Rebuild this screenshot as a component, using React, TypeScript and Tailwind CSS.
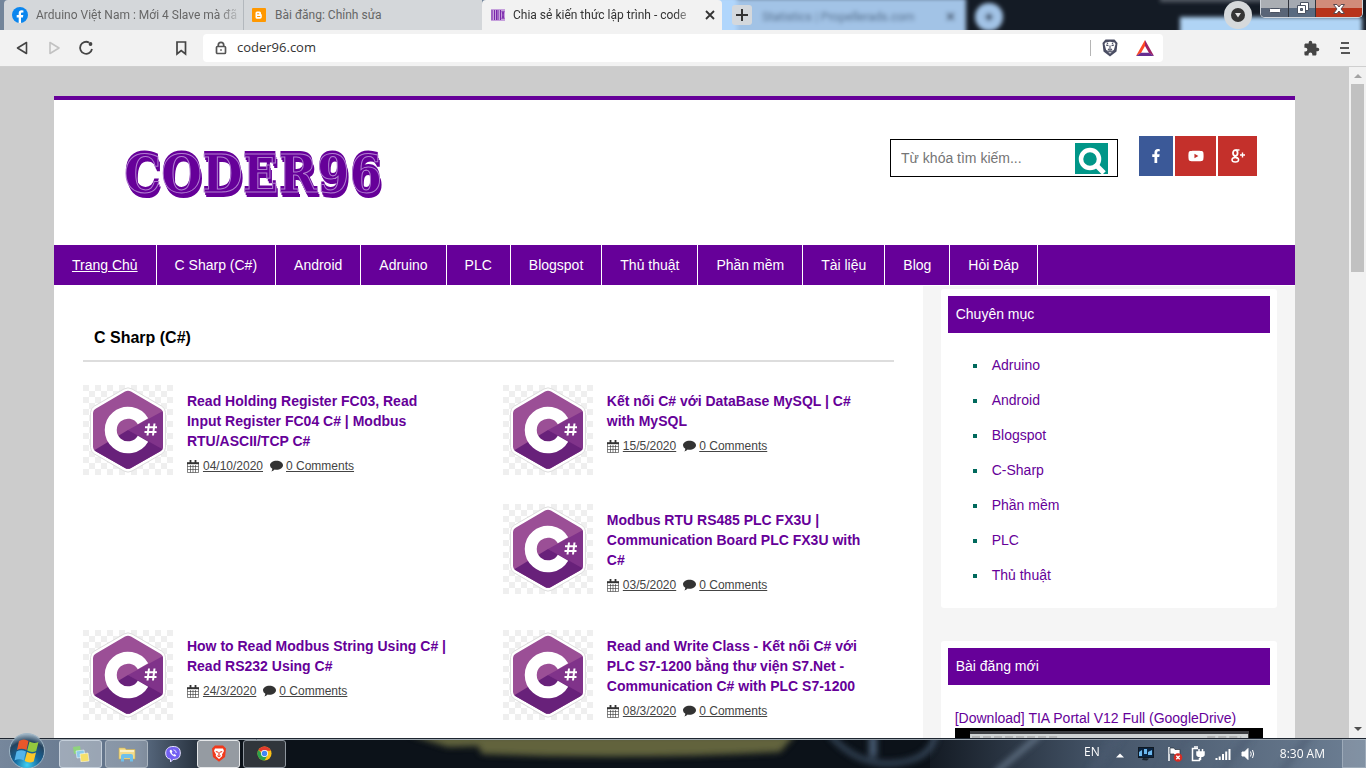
import { FaFacebookF, FaYoutube } from 'react-icons/fa';

const navItems = [
  'Trang Chủ',
  'C Sharp (C#)',
  'Android',
  'Adruino',
  'PLC',
  'Blogspot',
  'Thủ thuật',
  'Phần mềm',
  'Tài liệu',
  'Blog',
  'Hỏi Đáp',
];

const categories = ['Adruino', 'Android', 'Blogspot', 'C-Sharp', 'Phần mềm', 'PLC', 'Thủ thuật'];

const posts = [
  {
    title: 'Read Holding Register FC03, Read Input Register FC04 C# | Modbus RTU/ASCII/TCP C#',
    date: '04/10/2020',
    place: 'row-span-2',
  },
  { title: 'Kết nối C# với DataBase MySQL | C# with MySQL', date: '15/5/2020', place: '' },
  {
    title: 'Modbus RTU RS485 PLC FX3U | Communication Board PLC FX3U with C#',
    date: '03/5/2020',
    place: 'col-start-2',
  },
  { title: 'How to Read Modbus String Using C# | Read RS232 Using C#', date: '24/3/2020', place: 'col-start-1' },
  {
    title: 'Read and Write Class - Kết nối C# với PLC S7-1200 bằng thư viện S7.Net - Communication C# with PLC S7-1200',
    date: '08/3/2020',
    place: '',
  },
];

const TabBar = () => (
  <div className="relative flex h-[30px] shrink-0 overflow-hidden bg-[#141b25] pl-1">
    {/* Desktop seen through the glass frame */}
    <svg className="absolute inset-0 h-full w-full" aria-hidden="true">
      <defs>
        <filter id="glass" x="-10%" y="-50%" width="120%" height="200%">
          <feGaussianBlur stdDeviation="2" />
        </filter>
      </defs>
      <g filter="url(#glass)">
        <rect x="-10" y="-5" width="500" height="40" fill="#73859a" />
        <rect x="700" y="-2" width="266" height="45" fill="#a2c3e6" />
        <rect x="715" y="-4" width="22" height="45" fill="#b0d6fc" />
        <circle cx="989" cy="17" r="14" fill="#a2c3e6" />
        <path d="M985 17h8M989 13v8" stroke="#40536b" strokeWidth="3" />
        <path d="M947 13l7 7m0-7l-7 7" stroke="#40536b" strokeWidth="2" />
        <rect x="1180" y="17" width="182" height="40" fill="#b0d4f5" />
        <rect x="1160" y="-8" width="200" height="10" fill="#555b66" />
        <text x="762" y="21" fontSize="12" fill="#4c6685" fontFamily="Roboto, sans-serif">
          Statistics | Propellerads.com
        </text>
      </g>
    </svg>

    <div className="relative flex w-[240px] items-center gap-2 rounded-tl border-r border-[#b3b8bd] bg-[#d4d7da] pl-2">
      <svg viewBox="0 0 16 16" className="h-4 w-4 shrink-0">
        <circle cx="8" cy="8" r="8" fill="#0b86ee" />
        <path
          d="M9 16v-5.6h1.9l.4-2.3H9V6.7c0-.7.4-1.2 1.3-1.2h1.1v-2a9 9 0 0 0-1.8-.2c-1.8 0-2.9 1.1-2.9 3v1.8h-2v2.3h2V16z"
          fill="#fff"
        />
      </svg>
      <span className="flex-1 whitespace-nowrap [mask-image:linear-gradient(to_right,#000_88%,transparent)]">
        Arduino Việt Nam : Mới 4 Slave mà đã
      </span>
    </div>
    <div className="relative flex w-[238px] items-center gap-[9px] bg-[#d4d7da] pl-2">
      <svg viewBox="0 0 14 14" className="h-3.5 w-3.5 shrink-0">
        <rect width="14" height="14" rx="1" fill="#ff9800" />
        <path d="M5 3.500h2.500a1.500 1.500 0 0 1 1.500 1.500v.8c0 .5.3.7.8.7v2.500A1.700 1.700 0 0 1 8.100 10.700H5A1.500 1.500 0 0 1 3.500 9.200V5A1.500 1.500 0 0 1 5 3.500z" fill="#fff" />
        <path d="M5.500 5.800h1.300M5.500 8.500h2.400" stroke="#ff9800" strokeWidth="1" strokeLinecap="round" />
      </svg>
      <span>Bài đăng: Chỉnh sửa</span>
    </div>
    <div className="relative flex w-[240px] items-center gap-2 rounded-t bg-[#f2f2f2] pl-[9px] text-[#333]">
      <svg viewBox="0 0 14 12" className="h-3 w-3.5 shrink-0">
        <rect width="14" height="12" fill="#c6a0dc" />
        <path d="M1 1v10M3.500 1v10M5.500 1v10M7 1v10M9.500 1v10M11 2l2 8M13 2l-2 8" stroke="#7a27ab" strokeWidth="1" />
      </svg>
      <span className="flex-1 whitespace-nowrap [mask-image:linear-gradient(to_right,#000_88%,transparent)]">
        Chia sẻ kiến thức lập trình - code
      </span>
      <button aria-label="Close tab" className="mr-[7px]">
        <svg viewBox="0 0 10 10" className="h-2.5 w-2.5" stroke="#333" strokeWidth="1.8">
          <path d="M1 1l8 8M9 1l-8 8" />
        </svg>
      </button>
    </div>
    <button
      aria-label="New tab"
      className="relative mt-[5px] ml-2.5 flex h-5 w-5 items-center justify-center rounded-[3px] bg-[#d4d8dc]"
    >
      <svg viewBox="0 0 12 12" className="h-3 w-3" stroke="#333" strokeWidth="2">
        <path d="M6 0v12M0 6h12" />
      </svg>
    </button>

    <div className="relative ml-auto flex items-start gap-2 pr-[3px]">
      <button aria-label="Search tabs" className="mt-px flex h-7 w-7 items-center justify-center rounded-full bg-[#d6d9db]">
        <svg viewBox="0 0 14 14" className="h-3.5 w-3.5">
          <circle cx="7" cy="7" r="7" fill="#353535" />
          <path d="M4 5h6L7 9.500z" fill="#e4e4e4" />
        </svg>
      </button>
      <div className="flex h-[18px] overflow-hidden rounded-b-[5px] border border-t-0 border-[#cfd4da]">
        <button aria-label="Minimize" className="flex w-[28px] items-center justify-center border-r border-[#30343c] bg-linear-to-b from-[#aaaeb3] from-50% to-[#596577] to-50%">
          <svg viewBox="0 0 12 5" className="mt-1 h-[5px] w-3">
            <rect x=".5" y=".5" width="11" height="4" rx="1" fill="#fff" stroke="#4b5362" />
          </svg>
        </button>
        <button aria-label="Restore" className="flex w-[27px] items-center justify-center border-r border-[#30343c] bg-linear-to-b from-[#a4a9b1] from-50% to-[#596a80] to-50%">
          <svg viewBox="0 0 13 13" className="h-[13px] w-[13px]" fill="#fff" stroke="#4b5362">
            <path d="M4.500 .5h8v8h-8z" />
            <path d="M1.500 3.500h8v8h-8z" />
            <path d="M4.500 6.500h2v2h-2z" fill="#687789" />
          </svg>
        </button>
        <button aria-label="Close" className="flex w-[46px] items-center justify-center bg-linear-to-b from-[#d18c7a] from-50% to-[#b8331a] to-50%">
          <svg viewBox="0 0 12 10" className="h-2.5 w-3">
            <path d="M.5 .5H4L6 3 8 .5h3.500L8 5l3.500 4.500H8L6 7 4 9.500H.5L4 5z" fill="#fff" stroke="#5b4a50" />
          </svg>
        </button>
      </div>
    </div>
  </div>
);

const Toolbar = () => (
  <div className="flex h-[37px] shrink-0 items-center border-b border-[#cfcfcf] bg-[#f2f2f2] px-4">
    <button aria-label="Back">
      <svg viewBox="0 0 14 16" className="h-4 w-3.5" fill="none" stroke="#444" strokeWidth="1.6" strokeLinejoin="round">
        <path d="M10.500 2.500v11L1.500 8z" />
      </svg>
    </button>
    <button aria-label="Forward" className="ml-[18px]">
      <svg viewBox="0 0 14 16" className="h-4 w-3.5" fill="none" stroke="#c2c2c2" strokeWidth="1.6" strokeLinejoin="round">
        <path d="M2 2.500v11L11 8z" />
      </svg>
    </button>
    <button aria-label="Reload" className="ml-4">
      <svg viewBox="0 0 16 16" className="h-4 w-4" fill="none" stroke="#444" strokeWidth="1.8">
        <path d="M14 9a6 6 0 1 1-3-6.500" />
        <circle cx="12.500" cy="4" r="1.900" fill="#444" stroke="none" />
      </svg>
    </button>
    <button aria-label="Bookmark" className="ml-20">
      <svg viewBox="0 0 14 16" className="h-4 w-3.5" fill="none" stroke="#444" strokeWidth="1.7">
        <path d="M3 2h8.500v12L7.200 10.500 3 14z" />
      </svg>
    </button>
    <div className="ml-[15px] flex h-7 w-[960px] items-center rounded bg-white pr-2 pl-3">
      <svg viewBox="0 0 12 14" className="h-3.5 w-3 shrink-0" fill="none" stroke="#555" strokeWidth="1.7">
        <rect x="1.500" y="5.500" width="9" height="7" rx="1" />
        <path d="M3.300 5.500V4a2.700 2.700 0 0 1 5.400 0v1.500" />
        <path d="M5.200 9h1.600" />
      </svg>
      <input
        aria-label="Address"
        defaultValue="coder96.com"
        className="ml-2.5 min-w-0 flex-1 font-['Open_Sans','Noto_Sans',sans-serif] text-[13px] text-[#333] outline-none"
      />
      <div className="h-4 w-px bg-[#b5b5b5]" />
      <svg viewBox="0 0 16 18" className="ml-[11px] h-[18px] w-4 shrink-0">
        <path d="M3.500 .5h9L15.500 4l-1 8.500L8 17.500 1.500 12.500.5 4z" fill="#4a4d63" />
        <path d="M3.500 3.500L8 2.800l4.500 .7 1 1.500-1.500 5.500L8 14.800 4 10.500 2.500 5z" fill="#fff" />
        <path d="M4 6l2.500 .8M12 6l-2.500 .8M8 6.500v3.500M6 10l2 1.300 2-1.300M5.500 11.800L8 13l2.500-1.200M5 3.800l1 1.500M11 3.800l-1 1.500" stroke="#4a4d63" strokeWidth="1.1" fill="none" />
      </svg>
      <svg viewBox="0 0 18 16" className="mr-px ml-[18px] h-4 w-[18px] shrink-0">
        <path d="M9 0L0 16l5-3 4-7z" fill="#ff4724" />
        <path d="M9 0l9 16-5-3-4-7z" fill="#9e1f63" />
        <path d="M0 16h18l-5-3.200H5z" fill="#662d91" />
      </svg>
    </div>
    <button aria-label="Extensions" className="ml-auto">
      <svg viewBox="0 0 24 24" className="h-[17px] w-[17px]" fill="#444">
        <path d="M20.500 11H19V7c0-1.100-.9-2-2-2h-4V3.500a2.500 2.500 0 0 0-5 0V5H4c-1.100 0-2 .9-2 2v3.800h1.500a2.700 2.700 0 0 1 0 5.400H2V20c0 1.100.9 2 2 2h3.800v-1.500a2.700 2.700 0 0 1 5.400 0V22H17c1.100 0 2-.9 2-2v-4h1.500a2.500 2.500 0 0 0 0-5z" />
      </svg>
    </button>
    <button aria-label="Menu" className="ml-5">
      <svg viewBox="0 0 10 12" className="h-3 w-2.5" stroke="#555" strokeWidth="2">
        <path d="M1 1h8M0 6h9M1 11h9" />
      </svg>
    </button>
  </div>
);

const CSharpThumb = () => (
  <svg viewBox="0 0 90 90" className="h-[90px] w-[90px] shrink-0" role="img" aria-label="C#">
    <defs>
      <pattern id="checks" width="12" height="12" patternUnits="userSpaceOnUse">
        <rect width="12" height="12" fill="#fff" />
        <path d="M0 0h6v6H0zM6 6h6v6H6z" fill="#efefef" />
      </pattern>
      <clipPath id="hex">
        <path d="M42 6.500q3-1.700 6 0l29 17q3 1.700 3 5v33q0 3.300-3 5l-29 16.500q-3 1.700-6 0l-29-16.500q-3-1.700-3-5v-33q0-3.300 3-5z" />
      </clipPath>
    </defs>
    <rect width="90" height="90" fill="url(#checks)" />
    <path
      d="M41 4q4-2.300 8 0l29.500 17q4 2.300 4 6.500v35q0 4.200-4 6.500L49 86q-4 2.300-8 0L11.500 69q-4-2.300-4-6.500v-35q0-4.200 4-6.500z"
      fill="#fff"
      stroke="#ddd"
      strokeWidth="1"
    />
    <g clipPath="url(#hex)">
      <rect width="90" height="90" fill="#9b4f96" />
      <path d="M45 45l37-20v42z" fill="#80338a" />
      <path d="M10 66l35-21 36 20v25H10z" fill="#68217a" />
    </g>
    <path d="M60 36.300A17.300 17.300 0 1 0 60 53.700" fill="none" stroke="#fff" strokeWidth="12" />
    <path d="M66 38.500l-1.500 12M71.500 38.500l-1.500 12M62 42.200h12M61.500 47h12" stroke="#fff" strokeWidth="2" />
  </svg>
);

const CalendarIcon = () => (
  <svg viewBox="0 0 12 13" className="h-[13px] w-3" fill="none" stroke="#333">
    <path d="M.5 3v9.500h11V3M.5 6.500h11M.5 9.500h11M3.500 5v7.500M6 5v7.500M8.500 5v7.500" strokeWidth=".6" />
    <path d="M0 3.200h12" strokeWidth="2" />
    <path d="M3.500 0v3.500M8.500 0v3.500" strokeWidth="1.8" />
  </svg>
);

const CommentIcon = () => (
  <svg viewBox="0 0 13 12" className="mr-[3px] ml-[7px] h-3 w-[13px]" fill="#333">
    <path d="M6.500 .8C10 .8 13 2.800 13 5.300s-3 4.500-6.500 4.500q-1 0-1.800-.2Q3.200 11.300 1.300 11.500 2.300 10.300 2.300 8.800 0 7.500 0 5.300C0 2.800 3 .8 6.500 .8z" />
  </svg>
);

type PostProps = { title: string; date: string; place: string };

const Post = ({ title, date, place }: PostProps) => (
  <article className={`flex items-start gap-3.5 pr-[23px] ${place}`}>
    <CSharpThumb />
    <div className="pt-1.5">
      <h3 className="text-[14px] leading-5 font-bold text-[#660099]">
        <a href="#">{title}</a>
      </h3>
      <div className="mt-px mb-0.5 flex h-7 items-center text-[12px] text-[#444]">
        <CalendarIcon />
        <a href="#" className="ml-1 underline">{date}</a>
        <CommentIcon />
        <a href="#" className="underline">0 Comments</a>
      </div>
    </div>
  </article>
);

const Header = () => (
  <header className="flex h-[145px] items-start justify-between pr-[38px] pl-[70px]">
    <a
      href="#"
      className="mt-[42px] font-['DejaVu_Serif_Condensed','DejaVu_Serif',serif] text-[52px] leading-[64px] font-bold text-[#660099] [-webkit-text-stroke:1px_#b17dd0] [text-shadow:0_-3px_0_#660099,1px_3px_0_#660099,2px_5px_0_#660099]"
    >
      CODER96
    </a>
    <div className="flex pt-9">
      <form className="mt-[3px] flex h-[38px] w-[228px] items-start border border-black pt-[3px] pr-[9px] pl-2.5">
        <input
          type="text"
          aria-label="Từ khóa tìm kiếm"
          placeholder="Từ khóa tìm kiếm..."
          className="h-[30px] min-w-0 flex-1 text-[14px] outline-none placeholder:text-[#757575]"
        />
        <button type="button" aria-label="Search" className="h-[31px] w-[33px] bg-[#009688]">
          <svg viewBox="0 0 33 31" className="h-full w-full" fill="none" stroke="#fff">
            <circle cx="15" cy="16" r="9" strokeWidth="4.5" />
            <path d="M21 22l8 8" strokeWidth="5" />
          </svg>
        </button>
      </form>
      <div className="ml-[21px] flex h-10 gap-0.5 text-white">
        <a href="#" aria-label="Facebook" className="flex w-[34px] items-center justify-center bg-[#3b5998]">
          <FaFacebookF className="h-3.5 w-3.5" />
        </a>
        <a href="#" aria-label="YouTube" className="flex w-[41px] items-center justify-center bg-[#c4302b]">
          <FaYoutube className="h-4 w-4" />
        </a>
        <a href="#" aria-label="Google Plus" className="flex w-[39px] items-center justify-center bg-[#c4302b]">
          <svg viewBox="0 0 14 14" className="h-3.5 w-3.5" fill="none" stroke="#fff">
            <ellipse cx="4.300" cy="4" rx="2.300" ry="2.800" strokeWidth="1.8" />
            <ellipse cx="4.300" cy="10.700" rx="3.300" ry="2.300" strokeWidth="1.5" />
            <path d="M4 6.500q-1 1 .5 1.500t2 1.500M4.500 1H8.500" strokeWidth="1.6" />
            <path d="M9 6h5M11.500 3.500v5" strokeWidth="1.4" />
          </svg>
        </a>
      </div>
    </div>
  </header>
);

const Sidebar = () => (
  <aside className="mt-px flex w-[30%] flex-col gap-[33px] bg-[#f5f5f5] px-[18px] pt-[3px]">
    <section className="rounded-[3px] bg-white p-[7px]">
      <h2 className="bg-[#660099] px-2 text-[14px] leading-[37px] text-white">Chuyên mục</h2>
      <ul className="mt-[15px] pb-2 pl-[25px] text-[14px] leading-[35px]">
        {categories.map((name) => (
          <li key={name} className="flex items-center gap-[15px] before:h-1 before:w-1 before:bg-[#00695c]">
            <a href="#" className="text-[#660099]">{name}</a>
          </li>
        ))}
      </ul>
    </section>
    <section className="rounded-[3px] bg-white p-[7px]">
      <h2 className="bg-[#660099] px-2 text-[14px] leading-[37px] text-white">Bài đăng mới</h2>
      <div className="px-[7px] pt-[23px]">
        <a href="#" className="block text-[14px] leading-5 text-[#660099]">
          [Download] TIA Portal V12 Full (GoogleDrive)
        </a>
        <svg viewBox="0 0 308 180" className="w-full" role="img" aria-label="TIA Portal">
          <rect width="308" height="180" fill="#000" />
          <rect x="15" y="3" width="278" height="150" fill="#cfd3d3" />
          <rect x="15" y="3" width="278" height="3" fill="#3b3d40" />
          <path d="M17 9h88M252 9h34" stroke="#999" strokeWidth="1" strokeDasharray="8 3" />
        </svg>
      </div>
    </section>
  </aside>
);

const Page = () => (
  <div className="flex min-h-0 flex-1 bg-[#ccc]">
    <div className="min-w-0 flex-1 overflow-hidden">
      <div className="mx-auto mt-[29px] w-[92%] border-t-4 border-[#660099] bg-white">
        <Header />
        <nav className="bg-[#660099]">
          <ul className="flex w-[984px] text-[14px] leading-10 text-white">
            {navItems.map((item, i) => (
              <li key={item} className="grow border-r border-white text-center">
                <a href="#" className={i === 0 ? 'underline' : ''}>
                  <span className="px-4">{item}</span>
                </a>
              </li>
            ))}
          </ul>
        </nav>
        <div className="flex">
          <main className="w-[70%] px-[29px] pt-[29px]">
            <h2 className="border-b-2 border-[#ddd] pt-3 pb-2.5 pl-[11px] text-[16px] leading-6 font-bold text-black">
              C Sharp (C#)
            </h2>
            <div className="mt-[23px] grid grid-cols-2 items-start gap-[29px]">
              {posts.map((post) => (
                <Post key={post.title} {...post} />
              ))}
            </div>
          </main>
          <Sidebar />
        </div>
      </div>
    </div>

    {/* Scrollbar */}
    <div className="flex w-[17px] flex-col items-center justify-between bg-[#f1f1f1] py-1.5">
      <div className="flex flex-col items-center gap-[5px]">
        <svg viewBox="0 0 8 6" className="h-1.5 w-2" fill="#a3a3a3">
          <path d="M0 5l4-4 4 4z" />
        </svg>
        <div className="h-[188px] w-[13px] bg-[#c1c1c1]" />
      </div>
      <svg viewBox="0 0 8 6" className="h-1.5 w-2" fill="#505050">
        <path d="M0 1l4 4 4-4z" />
      </svg>
    </div>
  </div>
);

const taskButton = 'flex h-[28px] w-[43px] items-center justify-center rounded-[3px] border';

const Taskbar = () => (
  <footer className="relative flex h-[30px] shrink-0 items-center border-t border-[#1d2530] bg-[#0c1219] pl-2 text-[12px] text-white">
    {/* Wallpaper behind the translucent bar */}
    <svg className="absolute inset-0 h-full w-full" aria-hidden="true">
      <defs>
        <linearGradient id="barLeft">
          <stop offset="0" stopColor="#76879c" />
          <stop offset=".6" stopColor="#5d6f86" />
          <stop offset="1" stopColor="#0c1219" />
        </linearGradient>
        <linearGradient id="barRight">
          <stop offset="0" stopColor="#141b24" />
          <stop offset=".4" stopColor="#46566a" />
          <stop offset="1" stopColor="#6d7f94" />
        </linearGradient>
        <filter id="soft" x="-10%" y="-50%" width="120%" height="200%">
          <feGaussianBlur stdDeviation="3" />
        </filter>
      </defs>
      <rect width="230" height="30" fill="url(#barLeft)" />
      <rect x="930" width="436" height="30" fill="url(#barRight)" />
      <g filter="url(#soft)">
        <path d="M410-4h385l-15 17q-150 8-298 2l-4-8-30 1z" fill="#62643e" />
        <path d="M830-4q28 32 66 28t40-32" fill="none" stroke="#42566d" strokeWidth="4" />
        <path d="M873-4v22" stroke="#4f657e" strokeWidth="7" />
        <path d="M1040-4l-45 38" stroke="#7f93a8" strokeWidth="3" />
        <path d="M1120-4l-30 38M1190-4l-30 38M1250-4l-30 38M1310-4l-30 38" stroke="#4c5c70" strokeWidth="7" opacity=".6" />
      </g>
      <path d="M0 .5h1366" stroke="#9ba5ae" />
    </svg>

    <button aria-label="Start" className="relative -mt-2 h-[38px] w-[38px] self-start">
      <svg viewBox="0 0 38 38" className="h-full w-full">
        <defs>
          <radialGradient id="orb" cx=".5" cy=".9" r=".9">
            <stop offset="0" stopColor="#3fd0f4" />
            <stop offset=".4" stopColor="#14659b" />
            <stop offset=".75" stopColor="#24435e" />
            <stop offset="1" stopColor="#a9bdcc" />
          </radialGradient>
        </defs>
        <circle cx="19" cy="20" r="17.500" fill="url(#orb)" stroke="#9fb6c6" />
        <path d="M11 10q5-3 9.500 0l-2 9q-5-2.500-9.500 0z" fill="#e8572b" />
        <path d="M21.500 10.500q4 2.500 9 .5l-2.300 9q-4.500 2-9-.5z" fill="#93c83e" />
        <path d="M8.500 20.500q4.500-2.500 9.500 0l-2.300 9q-4.500-2.500-9.200 0z" fill="#54b4ea" />
        <path d="M19 21q4.500 2.500 9 .5l-2.300 9q-4.500 2-9-.5z" fill="#fbc72b" />
      </svg>
    </button>
    <div className="relative ml-[13px] flex gap-[3px]">
      <button aria-label="Sticky Notes" className={`${taskButton} border-[#c5cfda] bg-white/35`}>
        <svg viewBox="0 0 18 16" className="h-4 w-[18px]">
          <path d="M1 1l7-1 1 7-7 1z" fill="#8fd47c" />
          <path d="M4 5l8-1 1 7-8 1z" fill="#8ecbea" stroke="#fff" strokeWidth=".5" />
          <path d="M8 8l8-1 1 8-8 1z" fill="#f6e06a" stroke="#fff" strokeWidth=".5" />
        </svg>
      </button>
      <button aria-label="Explorer" className={`${taskButton} border-[#aab5c0] bg-white/25`}>
        <svg viewBox="0 0 18 16" className="h-4 w-[18px]">
          <path d="M1 2h6l1 1.500h9V13H1z" fill="#f3dc8c" stroke="#cfae4c" strokeWidth=".6" />
          <path d="M2 5h14" stroke="#fff8d8" strokeWidth="1.5" />
          <path d="M3 15.500V10q0-2 2-2h8q2 0 2 2v5.500h-3V12H6v3.500z" fill="#6fc0ea" />
        </svg>
      </button>
      <button aria-label="Viber" className={`${taskButton} border-transparent`}>
        <svg viewBox="0 0 16 16" className="h-4 w-4">
          <path d="M8 .5c5 0 7.300 2 7.300 6.500S13 13.500 8 13.500L5.500 16v-2.800C2 12.500 .7 10.500 .7 7S3 .5 8 .5z" fill="#7360f2" stroke="#e6e2ff" />
          <path d="M5 4q-1 1 .5 3.200T9.500 10.500q1.500 0 1.700-1.200L9.500 8l-1 .7Q7 8 6.700 6.500l.8-.8L6.300 3.800z" fill="#fff" />
          <path d="M8.500 3.800q2.700 .4 2.800 3.200" stroke="#fff" strokeWidth=".8" fill="none" />
        </svg>
      </button>
      <button aria-label="Brave" className={`${taskButton} border-[#e5e7e9] bg-[#959ba2]`}>
        <svg viewBox="0 0 16 17" className="h-[17px] w-4">
          <path d="M4 .5h8L15 3.500l-1 8.500L8 16.700 2 12 1 3.500z" fill="#f0391c" />
          <path d="M4 3.500h8l1 2.500-2 3.500 .3 1.500L8 14l-3.300-3L5 9.500 3 6z" fill="#fff" />
          <path d="M4.800 6.500l2.200 .7M11.200 6.500l-2.200 .7M8 7v3M6.500 10.500L8 11.500l1.500-1" stroke="#f0391c" strokeWidth="1.2" fill="none" />
        </svg>
      </button>
      <button aria-label="Chrome" className={`${taskButton} border-[#8f969e] bg-white/15`}>
        <svg viewBox="0 0 16 16" className="h-[15px] w-[15px]">
          <circle cx="8" cy="8" r="7.500" fill="#fbc116" />
          <path d="M8 8L1.500 4.250A7.500 7.500 0 0 1 14.500 4.250L14.300 5H8z" fill="#e33b2e" />
          <path d="M1.500 4.250A7.500 7.500 0 0 0 8 15.500L11 10 8 8 5 8z" fill="#2ba24c" />
          <circle cx="8" cy="8" r="3.700" fill="#fff" />
          <circle cx="8" cy="8" r="2.900" fill="#4285f4" />
        </svg>
      </button>
    </div>

    <div className="relative ml-auto flex h-full items-center">
      <span className="mb-1">EN</span>
      <svg viewBox="0 0 8 5" className="mt-1 ml-4 h-[5px] w-2" fill="#fff">
        <path d="M0 4.500L4 .5l4 4z" />
      </svg>
      <svg viewBox="0 0 16 14" className="ml-3.5 h-3.5 w-4">
        <rect x=".5" y=".5" width="15" height="10" fill="#0b2542" stroke="#101a24" />
        <path d="M1 9V5l3-2v6zM6 2h3v5H6zM10 5l4-2v5h-4z" fill="#6cb8ee" />
        <path d="M5 11l6 .5-2 2-5-.5z" fill="#1a232d" />
      </svg>
      <svg viewBox="0 0 16 16" className="ml-[13px] h-4 w-4">
        <path d="M2 1v14" stroke="#fff" strokeWidth="1.5" />
        <path d="M3 2h4l1 1.500h5v6H8L7 8H3z" fill="#fff" stroke="#26303c" strokeWidth=".7" />
        <circle cx="11" cy="11.500" r="4.300" fill="#d92b22" />
        <path d="M9.300 9.800l3.400 3.400m0-3.400l-3.400 3.400" stroke="#fff" strokeWidth="1.3" />
      </svg>
      <svg viewBox="0 0 14 16" className="ml-2 h-4 w-3.5" fill="none" stroke="#fff" strokeWidth="1.5">
        <path d="M7 2.500H1.500v12h7V12" />
        <path d="M3 1h4" />
        <path d="M6 6h7v2.500q0 2-3.500 2T6 8.500z" fill="#fff" />
        <path d="M8 3v3M11.500 3v3M9.500 10.500V14" />
      </svg>
      <svg viewBox="0 0 16 12" className="ml-2.5 h-3 w-4" stroke="#fff" strokeWidth="2">
        <path d="M1.500 12V10M4.700 12V8.500M8 12V6M11.200 12V3.500M14.500 12V1" />
      </svg>
      <svg viewBox="0 0 14 14" className="ml-2.5 h-3.5 w-3.5" fill="none" stroke="#fff">
        <path d="M1 5h2.500L7 1.500v11L3.500 9H1z" fill="#fff" />
        <path d="M9.500 4.500q1.500 2.500 0 5M11.500 3q2.300 4 0 8" />
      </svg>
      <time className="ml-[25px]">8:30 AM</time>
      <button aria-label="Show desktop" className="ml-[17px] h-full w-6 border border-[#a9b6c3]/70 bg-white/15" />
    </div>
  </footer>
);

export default function App() {
  return (
    <div className="flex h-screen flex-col overflow-hidden font-['Liberation_Sans',Arial,sans-serif]">
      <div className="shrink-0 font-[Roboto,'Noto_Sans',sans-serif] text-[12px] text-[#666]">
        <TabBar />
        <Toolbar />
      </div>
      <Page />
      <div className="shrink-0 font-['Open_Sans','Noto_Sans',sans-serif]">
        <Taskbar />
      </div>
    </div>
  );
}
